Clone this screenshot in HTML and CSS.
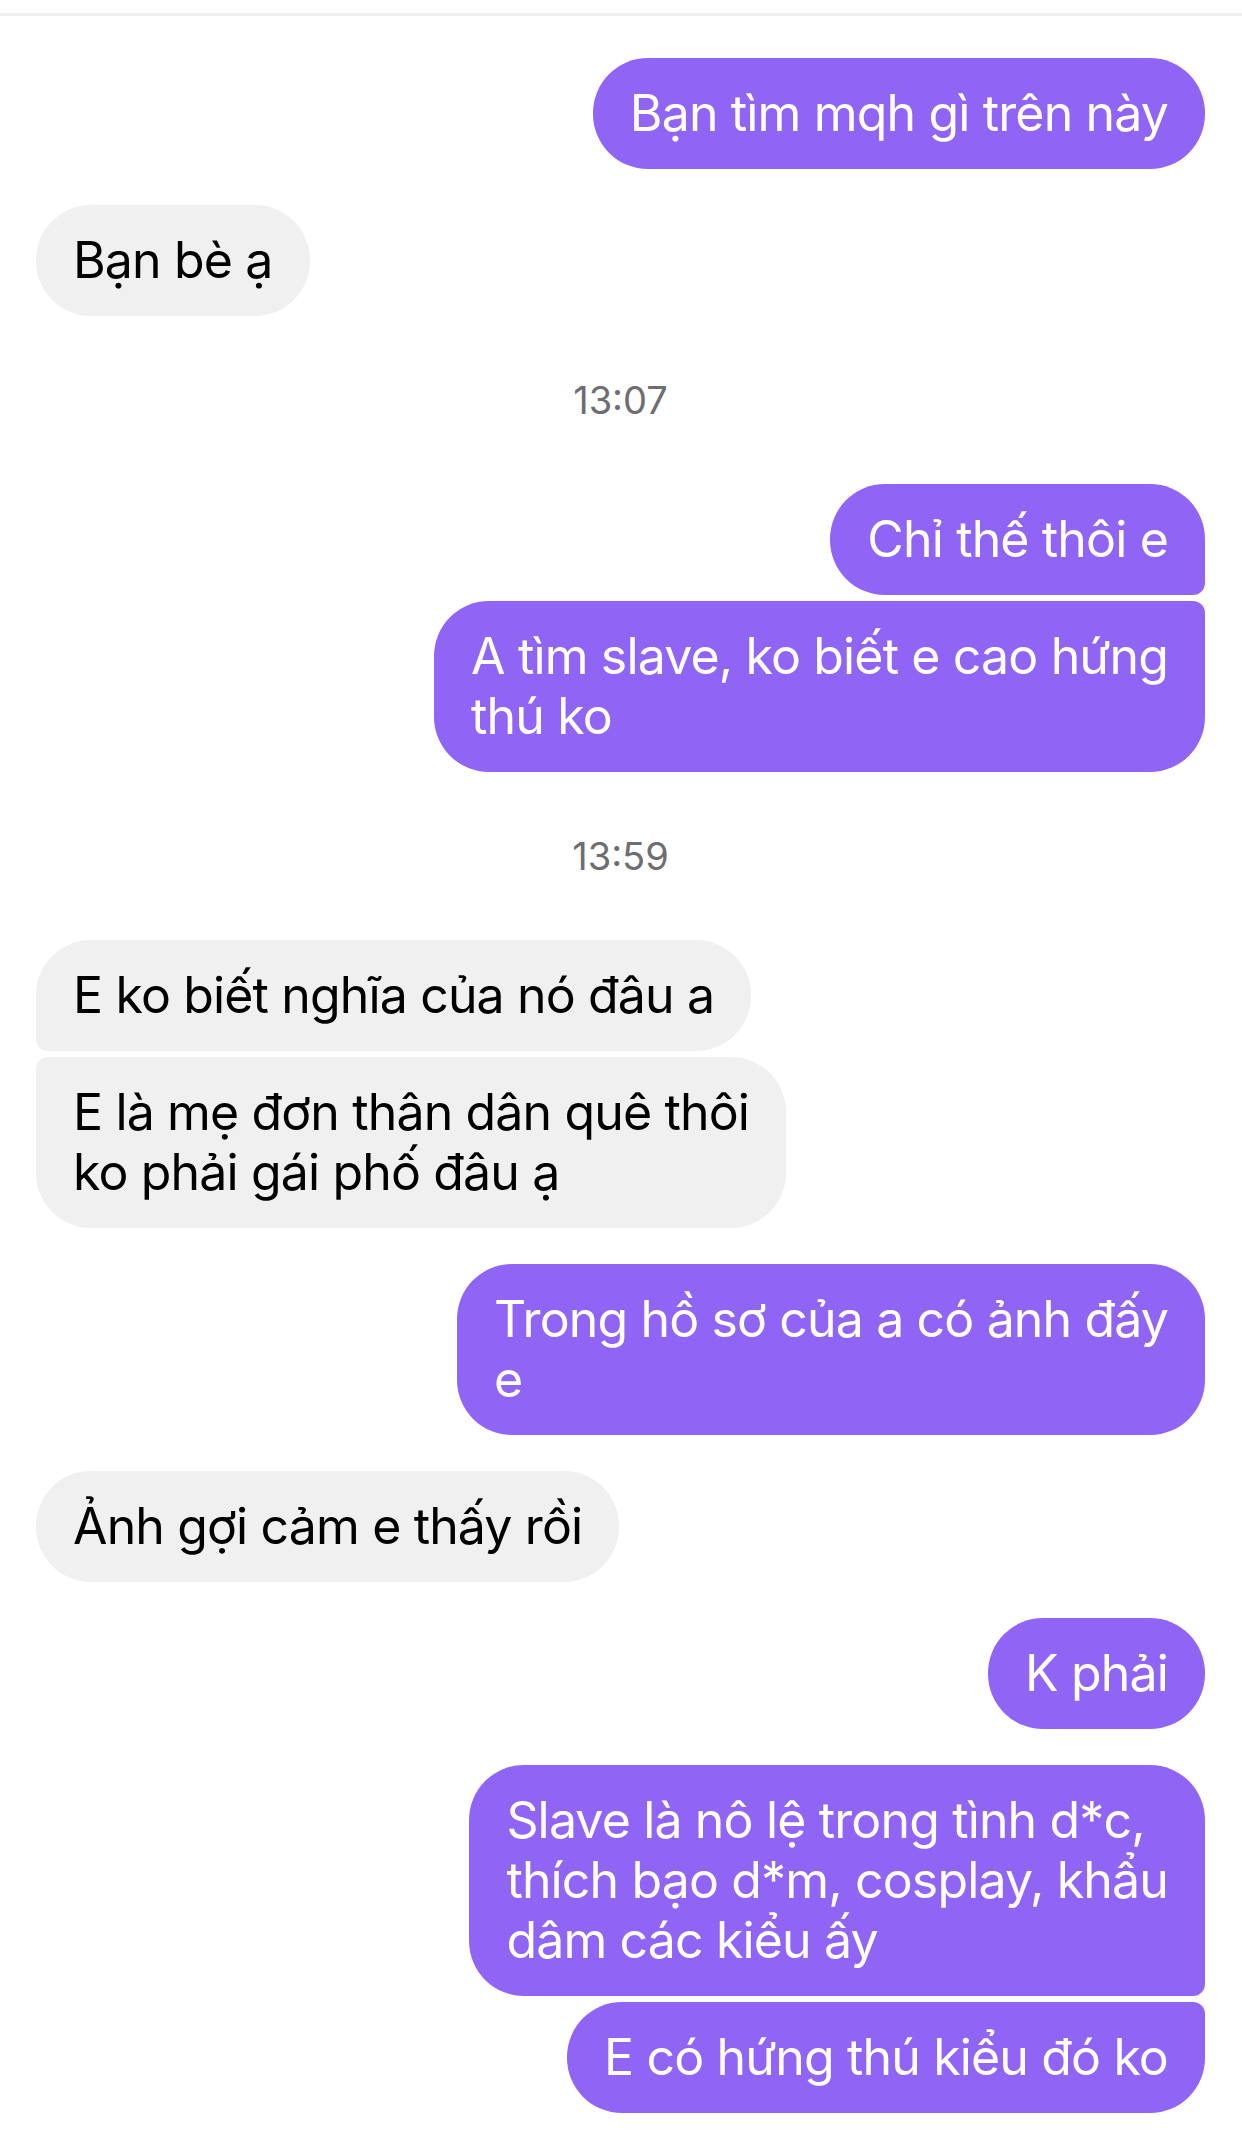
FILE: index.html
```html
<!DOCTYPE html>
<html lang="vi">
<head>
<meta charset="utf-8">
<title>Chat</title>
<link rel="stylesheet" href="styles.css">
</head>
<body>
<div class="topline"></div>
<main class="chat">
  <div class="group out">
    <div class="bubble">Bạn tìm mqh gì trên này</div>
  </div>
  <div class="group in">
    <div class="bubble">Bạn bè ạ</div>
  </div>
  <div class="time">13:07</div>
  <div class="group out">
    <div class="bubble first">Chỉ thế thôi e</div>
    <div class="bubble last">A tìm slave, ko biết e cao hứng<br>thú ko</div>
  </div>
  <div class="time">13:59</div>
  <div class="group in">
    <div class="bubble first">E ko biết nghĩa của nó đâu a</div>
    <div class="bubble last">E là mẹ đơn thân dân quê thôi<br>ko phải gái phố đâu ạ</div>
  </div>
  <div class="group out">
    <div class="bubble">Trong hồ sơ của a có ảnh đấy<br>e</div>
  </div>
  <div class="group in">
    <div class="bubble">Ảnh gợi cảm e thấy rồi</div>
  </div>
  <div class="group out">
    <div class="bubble">K phải</div>
  </div>
  <div class="group out">
    <div class="bubble first">Slave là nô lệ trong tình d*c,<br>thích bạo d*m, cosplay, khẩu<br>dâm các kiểu ấy</div>
    <div class="bubble last">E có hứng thú kiểu đó ko</div>
  </div>
</main>
</body>
</html>
```
FILE: styles.css
```css
html, body {
  margin: 0;
  padding: 0;
  background: #ffffff;
}
body {
  width: 1242px;
  height: 2137px;
  overflow: hidden;
  font-family: "Inter", "Noto Sans", sans-serif;
}
.topline {
  margin-top: 13px;
  height: 3px;
  background: #eeeeee;
}
.chat {
  display: flex;
  flex-direction: column;
  padding: 42px 37px 0 36px;
  gap: 36px;
}
.group {
  display: flex;
  flex-direction: column;
  gap: 6px;
}
.group.out { align-items: flex-end; }
.group.in { align-items: flex-start; }
.bubble {
  font-size: 50px;
  line-height: 60px;
  letter-spacing: -0.85px;
  padding: 25px 37px 26px 37px;
  border-radius: 55px;
  white-space: nowrap;
}
.out .bubble {
  background: #9065f5;
  color: #ffffff;
}
.in .bubble {
  background: #f0f0f0;
  color: #000000;
}
.out .bubble.first { border-bottom-right-radius: 12px; }
.out .bubble.last { border-top-right-radius: 12px; }
.in .bubble.first { border-bottom-left-radius: 12px; }
.in .bubble.last { border-top-left-radius: 12px; }
.time {
  align-self: center;
  font-size: 38px;
  line-height: 46px;
  color: #6d6d72;
  margin: 25px 0 25px;
}
```
